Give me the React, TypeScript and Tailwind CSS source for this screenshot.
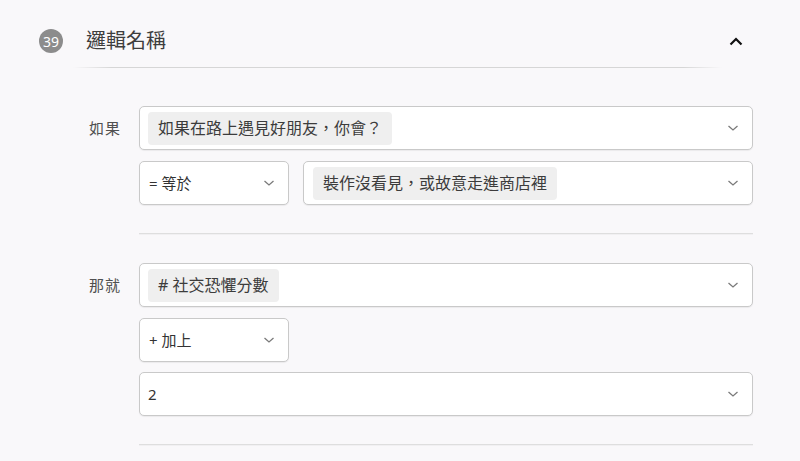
import React from 'react';

const font = { fontFamily: '"Noto Sans", "Noto Sans CJK TC", sans-serif' };

function ChevronDown() {
  return (
    <svg width="12" height="8" viewBox="0 0 12 8" className="shrink-0">
      <polyline points="1.5,2 6,6 10.5,2" fill="none" stroke="#7a7a7a" strokeWidth="1.3" />
    </svg>
  );
}

function Chip({ children }: { children: React.ReactNode }) {
  return (
    <span className="h-[33px] px-[10px] flex items-center rounded-[4px] bg-[#efefef] text-[16px] text-[#3c3c3c] whitespace-nowrap">
      {children}
    </span>
  );
}

function Select({ children, className = '' }: { children: React.ReactNode; className?: string }) {
  return (
    <div
      className={`h-[44px] shrink-0 bg-white border border-[#c9c9c9] rounded-[5px] shadow-[0_1px_1px_rgba(0,0,0,0.06)] flex items-center pl-[8px] pr-[13px] ${className}`}
    >
      <div className="flex-1 flex items-center min-w-0">{children}</div>
      <ChevronDown />
    </div>
  );
}

function Divider() {
  return <div className="h-px bg-[#dedede] shadow-[0_1px_0_#f1f0f2]" />;
}

export default function App() {
  return (
    <div style={font} className="w-[800px] h-[461px] overflow-hidden bg-[#f9f8fa]">
      {/* Header */}
      <div className="pt-[29px] pl-[39px] pr-[57px] flex items-center h-[53px]">
        <div className="w-[24px] h-[24px] rounded-full bg-[#8c8c8c] text-white text-[14px] flex items-center justify-center">
          39
        </div>
        <h1 className="ml-[23px] text-[20px] text-[#3e3e3e] leading-none">邏輯名稱</h1>
        <div className="flex-1" />
        <svg width="14" height="9" viewBox="0 0 14 9">
          <polyline points="1.5,7.5 7,2 12.5,7.5" fill="none" stroke="#111" strokeWidth="2.2" />
        </svg>
      </div>
      <div className="mt-[14px] ml-[73px] mr-[78px] h-px bg-[linear-gradient(to_right,transparent,#d6d6d6_6%,#d6d6d6_94%,transparent)]" />

      <div className="pl-[89px] pr-[47px] pt-[38px]">
        {/* 如果 */}
        <div className="flex">
          <div className="w-[50px] h-[44px] flex items-center text-[15px] text-[#505050] tracking-[1px]">如果</div>
          <div className="flex-1 flex flex-col gap-[11px]">
            <Select>
              <Chip>如果在路上遇見好朋友，你會？</Chip>
            </Select>
            <div className="flex gap-[14px]">
              <Select className="w-[150px] pl-[9px]">
                <span className="text-[15px] text-[#333]">= 等於</span>
              </Select>
              <Select className="flex-1 pl-[9px]">
                <Chip>裝作沒看見，或故意走進商店裡</Chip>
              </Select>
            </div>
            <div className="mt-[17px]">
              <Divider />
            </div>
          </div>
        </div>

        {/* 那就 */}
        <div className="flex mt-[29px]">
          <div className="w-[50px] h-[44px] flex items-center text-[15px] text-[#505050] tracking-[1px]">那就</div>
          <div className="flex-1 flex flex-col gap-[11px]">
            <Select>
              <Chip># 社交恐懼分數</Chip>
            </Select>
            <Select className="w-[150px] pl-[9px] -mb-px">
              <span className="text-[15px] text-[#333]">+ 加上</span>
            </Select>
            <Select>
              <span className="text-[15px] text-[#333]">2</span>
            </Select>
            <div className="mt-[17px]">
              <Divider />
            </div>
          </div>
        </div>
      </div>
    </div>
  );
}
